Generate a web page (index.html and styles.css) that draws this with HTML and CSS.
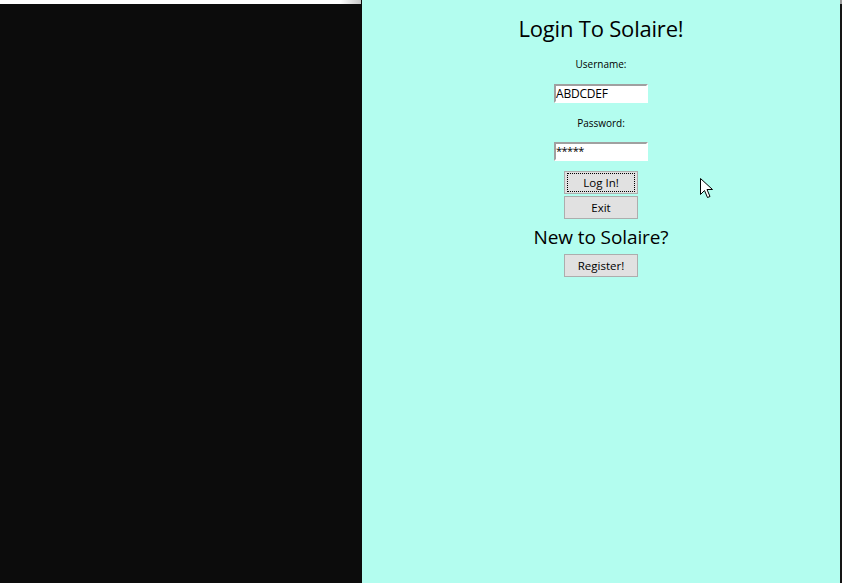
FILE: index.html
```html
<!DOCTYPE html>
<html>
<head>
<meta charset="utf-8">
<link rel="stylesheet" href="styles.css">
</head>
<body>
<div class="screen">
  <div class="dark-pane">
    <div class="dark-top"></div>
  </div>
  <div class="form-pane">
    <h1 class="title">Login To Solaire!</h1>
    <div class="label label-user">Username:</div>
    <div class="field field-user">ABDCDEF</div>
    <div class="label label-pass">Password:</div>
    <div class="field field-pass">*****</div>
    <div class="btn btn-login"><span class="focus">Log In!</span></div>
    <div class="btn btn-exit">Exit</div>
    <div class="subtitle">New to Solaire?</div>
    <div class="btn btn-register">Register!</div>
    <svg class="cursor" width="14" height="22" viewBox="0 0 14 22">
      <path d="M0.5 0.5 L0.5 16.5 L4.5 12.5 L7.5 19.5 L10 18.5 L7 11.5 L12.5 11.5 Z" fill="#ffffff" stroke="#000000" stroke-width="1"/>
    </svg>
  </div>
  <div class="edge">
    <div class="edge-top"></div>
  </div>
</div>
</body>
</html>
```
FILE: styles.css
```css
html, body {
  margin: 0;
  padding: 0;
  background: #0c0c0c;
}
.screen {
  display: flex;
  width: 842px;
  height: 583px;
  overflow: hidden;
  font-family: "Open Sans", "Noto Sans", sans-serif;
  color: #000;
}
.dark-pane {
  width: 362px;
  background: #0c0c0c;
  flex: none;
}
.dark-top {
  height: 4px;
  width: 361px;
  background: linear-gradient(to right, #ffffff 0, #ffffff 340px, #c8c8c8 361px);
}
.form-pane {
  position: relative;
  width: 478px;
  flex: none;
  background: #b3fdef;
  display: flex;
  flex-direction: column;
  align-items: center;
}
.edge {
  width: 2px;
  flex: none;
  background: #151515;
}
.edge-top {
  height: 4px;
  background: #9a9a9a;
}
.title {
  margin: 14px 0 0 0;
  font-size: 22px;
  font-weight: 400;
  line-height: 28px;
  letter-spacing: -0.2px;
}
.label {
  font-size: 10px;
  line-height: 12px;
}
.label-user {
  margin-top: 16px;
}
.label-pass {
  margin-top: 14px;
}
.field {
  width: 90px;
  height: 15px;
  background: #ffffff;
  border-top: 2px solid #a0a0a0;
  border-left: 2px solid #a0a0a0;
  border-right: 2px solid #ffffff;
  border-bottom: 2px solid #ffffff;
  font-size: 12px;
  line-height: 15px;
  padding: 0;
  box-sizing: content-box;
  letter-spacing: -0.2px;
}
.field-user {
  margin-top: 14px;
}
.field-pass {
  margin-top: 13px;
  font-size: 11px;
  line-height: 13px;
  letter-spacing: -0.5px;
}
.btn {
  width: 72px;
  height: 21px;
  background: #e1e1e1;
  border: 1px solid #adadad;
  display: flex;
  align-items: center;
  justify-content: center;
  font-size: 11.5px;
  line-height: 14px;
}
.btn-login {
  margin-top: 10px;
}
.btn-exit {
  margin-top: 2px;
}
.btn-register {
  margin-top: 4px;
}
.focus {
  display: flex;
  align-items: center;
  justify-content: center;
  width: 66px;
  height: 17px;
  border: 1px dotted #000;
}
.subtitle {
  margin-top: 6px;
  font-size: 19px;
  line-height: 25px;
  letter-spacing: -0.1px;
}
.cursor {
  position: absolute;
  left: 338px;
  top: 178px;
}
```
